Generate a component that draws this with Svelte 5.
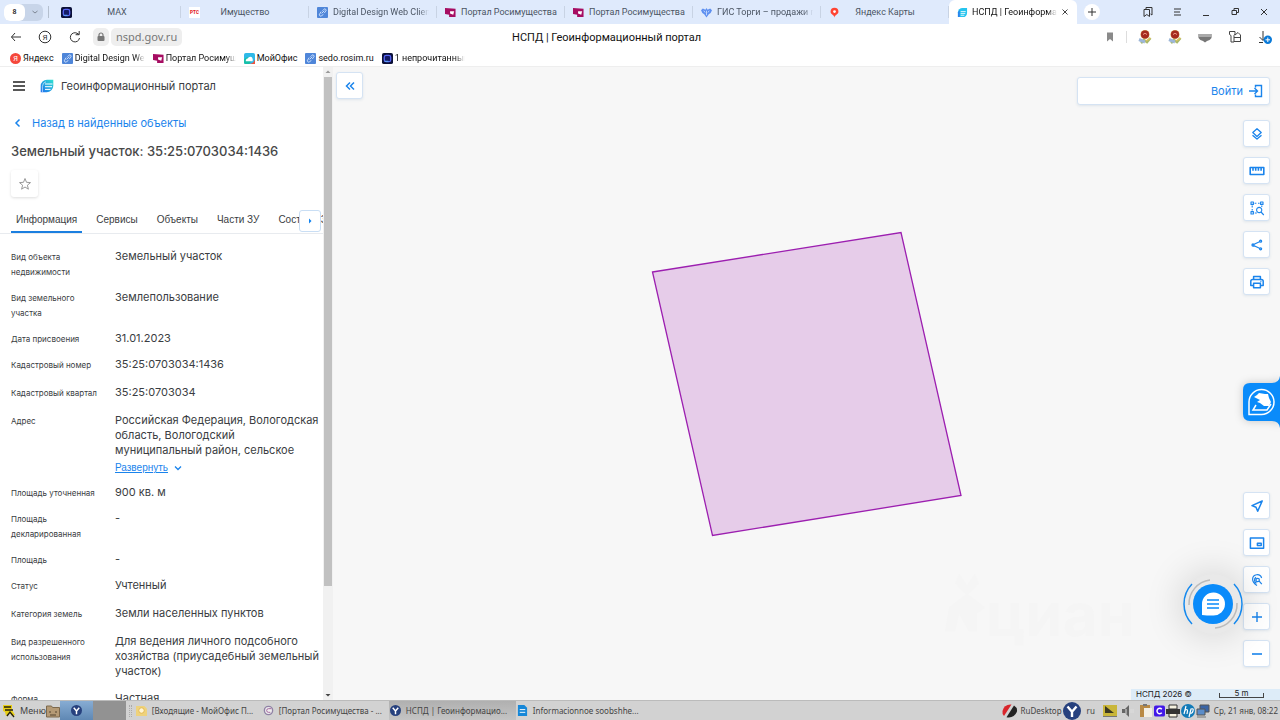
<script>
  const tabs = [
    { icon: "max", title: "MAX", short: true },
    { icon: "rts", title: "Имущество", short: true },
    { icon: "link", title: "Digital Design Web Client", cut: true },
    { icon: "rosim", title: "Портал Росимущества" },
    { icon: "rosim", title: "Портал Росимущества" },
    { icon: "gis", title: "ГИС Торги – продажи го", cut: true },
    { icon: "pin", title: "Яндекс Карты", short: true },
    { icon: "nspd", title: "НСПД | Геоинформац", active: true, cut: true },
  ];

  const bookmarks = [
    { icon: "ya", title: "Яндекс" },
    { icon: "link", title: "Digital Design Web", cut: true },
    { icon: "rosim", title: "Портал Росимущ", cut: true },
    { icon: "office", title: "МойОфис" },
    { icon: "link", title: "sedo.rosim.ru" },
    { icon: "max", title: "1 непрочитанный", cut: true },
  ];

  const sections = ["Информация", "Сервисы", "Объекты", "Части ЗУ", "Состав ЕЗП"];

  const rows = [
    { label: "Вид объекта недвижимости", value: "Земельный участок" },
    { label: "Вид земельного участка", value: "Землепользование" },
    { label: "Дата присвоения", value: "31.01.2023" },
    { label: "Кадастровый номер", value: "35:25:0703034:1436", tall: true },
    { label: "Кадастровый квартал", value: "35:25:0703034", tall: true },
    {
      label: "Адрес",
      value: "Российская Федерация, Вологодская область, Вологодский муниципальный район, сельское",
      more: true,
    },
    { label: "Площадь уточненная", value: "900 кв. м" },
    { label: "Площадь декларированная", value: "-" },
    { label: "Площадь", value: "-" },
    { label: "Статус", value: "Учтенный", tall: true },
    { label: "Категория земель", value: "Земли населенных пунктов", tall: true },
    {
      label: "Вид разрешенного использования",
      value: "Для ведения личного подсобного хозяйства (приусадебный земельный участок)",
      tall: true,
    },
    { label: "Форма собственности", value: "Частная" },
  ];

  const topTools = [
    { name: "Слои", d: "M8 2.8 12.2 6.600 8 10.400 3.800 6.600ZM3.500 9.200 8 13l4.500-3.800" },
    { name: "Измерения", w: 1.6, d: "M1.2 4.5h13.6v7H1.2ZM4 4.5v3.2M6.7 4.5v3.2M9.4 4.5v3.2M12.1 4.5v3.2" },
    {
      name: "Поиск в области",
      w: 1.1,
      d: "M2 2h2.4v2.4H2ZM11.6 2H14v2.4h-2.4ZM2 11.6h2.4V14H2ZM5.6 3.2h1.8M9 3.2h1.6M3.2 5.6v1.8M3.2 9v1.6M5.8 13h2M12.8 5.6v1.4M7.6 10a2.6 2.6 0 1 0 5.2 0a2.6 2.6 0 1 0-5.2 0M12 12l2.8 3",
    },
    {
      name: "Поделиться",
      w: 1.3,
      d: "M4.600 7.500 11 4.500M4.600 8.500l6.400 3M3 8a1 1 0 1 0 2 0a1 1 0 1 0-2 0M10.600 4.200a1 1 0 1 0 2 0a1 1 0 1 0-2 0M10.600 11.800a1 1 0 1 0 2 0a1 1 0 1 0-2 0",
    },
    { name: "Печать", w: 1.5, d: "M4.6 5.4V2.4h6.8v3M4.2 11.4H1.8v-4.200q0-1.800 1.800-1.800h8.800q1.800 0 1.800 1.800v4.200h-2.400M4.600 9.200h6.800v4.600H4.600ZM11.400 7.400h1" },
  ];

  const bottomTools = [
    { name: "Моё местоположение", w: 1.5, d: "M13.200 3 3 7.600l4 1.700L8.700 13.200Z" },
    { name: "Обзорная карта", w: 1.5, d: "M1.400 3h13.200v10.200H1.400ZM8.400 8.200h3.800v2.400H8.400Z" },
    {
      name: "Поиск по координатам",
      w: 1.2,
      d: "M8 13.500C5 11.500 3.600 9.600 3.600 7.200a4.600 4.600 0 0 1 9-1.200M7 8a1.700 1.700 0 1 0 3.400 0a1.700 1.700 0 1 0-3.400 0M7.500 11.200a3.500 3.500 0 0 1-.5-6M10.400 9.400l2.400 2.800",
    },
    { name: "Приблизить", w: 1.4, d: "M8 3v10M3 8h10" },
    { name: "Отдалить", w: 1.6, d: "M3 8h10" },
  ];

  const windows = [
    { icon: "mail", title: "[Входящие - МойОфис П..." },
    { icon: "chrome", title: "[Портал Росимущества - ..." },
    { icon: "browser", title: "НСПД | Геоинформацио...", active: true },
    { icon: "doc", title: "Informacionnoe soobshhe..." },
  ];

  let section = $state("Информация");
</script>

{#snippet favicon(name)}
  <svg class="favicon" viewBox="0 0 12 12" aria-hidden="true">
    {#if name === "max"}
      <rect width="12" height="12" rx="2" fill="#0b1038" />
      <rect x="2.500" y="2.500" width="7" height="7" rx="2" fill="#141a66" stroke="#5865f5" stroke-width="1.400" />
      <path d="M3 9h4" stroke="#5fb7f7" />
    {:else if name === "rts"}
      <rect width="12" height="12" fill="#fff" />
      <text x="6" y="8" text-anchor="middle" font-size="5" font-weight="900" fill="#e31b23">РТС</text>
    {:else if name === "link"}
      <rect width="12" height="12" rx="1" fill="#4f86d9" />
      <path d="m5 7 3-3m-3.500 1L3 7.500a1.300 1.300 0 0 0 2 2L7 8M6 4l1.500-1.500a1.300 1.300 0 0 1 2 2L8 6.500" fill="none" stroke="#d8e8ff" />
    {:else if name === "rosim"}
      <path d="M0 1 11.500 2v9H4.500V8.500L0 7.500Z" fill="#a60d62" />
      <path d="M5.500 4.500h4.500l-1 4L5.500 7Z" fill="#fff" />
    {:else if name === "gis"}
      <path d="m6 1 1.200 2L10 1.500l2 2-1.500 3L8.500 8 6 11.500 3.500 8l-2-1.500L0 3.500l2-2L4.800 3Z" fill="#5d8ff0" />
      <path d="M6 4v5M3 4l1.500 2M9 4 7.500 6" stroke="#e2edfd" stroke-width=".8" />
    {:else if name === "pin"}
      <path d="M6 .800a4.300 4.300 0 0 0-4.300 4.300C1.700 8 6 8.500 6 11.800 6 8.500 10.300 8 10.300 5.100A4.300 4.300 0 0 0 6 .800Z" fill="#f43" />
      <circle cx="6" cy="5" r="1.500" fill="#fff" />
    {:else if name === "ya"}
      <circle cx="6" cy="6" r="6" fill="#f5473b" />
      <text x="6" y="9" text-anchor="middle" font-size="8" fill="#fff">Я</text>
    {:else if name === "office"}
      <rect width="12" height="12" rx="2" fill="#2fb9e8" />
      <path d="M0 7q4-5 7 0 1 3-1 5H2Q0 12 0 10Z" fill="#16c0a9" />
      <path d="M12 7v5H5q5 0 7-5Z" fill="#f0523d" />
      <path d="M2 9V7.500q1-1.500 2-1.500 1-2 3-2t2.500 2.500V9Z" fill="#fff" />
    {:else}
      <path d="M1 11V6a5 5 0 0 1 5-5h5v5.500A4.500 4.500 0 0 1 6.500 11Z" fill="#25c4ee" />
      <path d="M4 5h5.500M4 7h5M4 9h4" stroke="#fff" stroke-width=".9" />
      <path d="M1 11V6l2-3v8Z" fill="#2b83ee" />
    {/if}
  </svg>
{/snippet}

{#snippet tool(item)}
  <button class="tool" aria-label={item.name}>
    <svg viewBox="0 0 16 16" width="16" height="16">
      <path d={item.d} fill="none" stroke="currentColor" stroke-width={item.w ?? 1.3} stroke-linejoin="round" />
    </svg>
  </button>
{/snippet}

{#snippet flower()}
  <svg viewBox="0 0 14 14" width="14" height="14">
    <path d="m3 13 3-3 3 2 3.500-4" fill="none" stroke="#a9b96b" stroke-width="2.500" />
    <path d="m1 9.500 6 2.500" stroke="#9db6d8" stroke-width="3" />
    <path d="m8 11 4.500-3" stroke="#e0c25a" stroke-width="1.500" />
    <circle cx="7" cy="4.500" r="4.500" fill="#d69b51" />
    <circle cx="7" cy="4.500" r="4" fill="#a52a20" />
    <path d="M5 4.500q2-2.500 4 0" fill="none" stroke="#ef9a84" />
  </svg>
{/snippet}

<div class="screen">
  <div class="tabbar">
    <button class="counter"><span>8</span>
      <svg viewBox="0 0 8 8" width="8" height="8"><path d="m1.500 3 2.500 2L6.500 3" fill="none" stroke="#7e8794" /></svg>
    </button>
    <div class="tabs">
      {#each tabs as tab}
        <div class="tab" class:active={tab.active} class:short={tab.short}>
          {@render favicon(tab.icon)}
          <span class="tab-title" class:fade={tab.cut}>{tab.title}</span>
          {#if tab.active}
            <button class="plain" aria-label="Закрыть вкладку">
              <svg viewBox="0 0 8 8" width="8" height="8"><path d="m1.500 1.500 5 5m0-5-5 5" stroke="#444" /></svg>
            </button>
          {/if}
        </div>
      {/each}
    </div>
    <button class="new-tab" aria-label="Новая вкладка">
      <svg viewBox="0 0 8 8" width="8" height="8"><path d="M4 0v8M0 4h8" stroke="#333" /></svg>
    </button>
    <div class="window-controls">
      <button class="plain" aria-label="Коллекции">
        <svg viewBox="0 0 12 12" width="12" height="12"><path d="M4 3V1.500h6v7.500L8.500 8M2 3.500h5.500v7L4.800 8.500 2 10.500Z" fill="none" stroke="#333" stroke-linejoin="round" /></svg>
      </button>
      <button class="plain" aria-label="Меню">
        <svg viewBox="0 0 12 12" width="12" height="12"><path d="M3 3h7M3 6h6M3 9h7" stroke="#333" /></svg>
      </button>
      <button class="plain" aria-label="Свернуть">
        <svg viewBox="0 0 12 12" width="12" height="12"><path d="M3 9.500h6" stroke="#333" /></svg>
      </button>
      <button class="plain" aria-label="Развернуть окно">
        <svg viewBox="0 0 12 12" width="12" height="12"><path d="M5 4V2.500h4.500v4H8M3 4.500h4.500v4H3Z" fill="none" stroke="#333" /></svg>
      </button>
      <button class="plain" aria-label="Закрыть">
        <svg viewBox="0 0 12 12" width="12" height="12"><path d="m3 3 6 6m0-6-6 6" stroke="#333" /></svg>
      </button>
    </div>
  </div>

  <div class="navbar">
    <div class="nav-buttons">
      <button class="plain" aria-label="Назад">
        <svg viewBox="0 0 12 12" width="12" height="12"><path d="M11 6H1.500M5 2 1.500 6 5 10" fill="none" stroke="#333" /></svg>
      </button>
      <button class="plain" aria-label="Яндекс">
        <svg viewBox="0 0 14 14" width="14" height="14">
          <circle cx="7" cy="7" r="5.800" fill="none" stroke="#333" />
          <text x="7" y="10" text-anchor="middle" font-size="8" fill="#333">Я</text>
        </svg>
      </button>
      <button class="plain" aria-label="Обновить">
        <svg viewBox="0 0 14 14" width="14" height="14"><path d="M11.500 8A4.600 4.600 0 1 1 9 3.200L11 4.500M11.200 1v3.700H7.600" fill="none" stroke="#333" /></svg>
      </button>
    </div>
    <div class="address">
      <span class="lock">
        <svg viewBox="0 0 8 10" width="8" height="10"><path d="M2 5V3a2 2 0 0 1 4 0v2" fill="none" stroke="#777" stroke-width="1.200" /><rect x=".5" y="4" width="7" height="5" rx="1" fill="#777" /></svg>
      </span>
      <a class="host" href="#host">nspd.gov.ru</a>
    </div>
    <div class="page-title">НСПД | Геоинформационный портал</div>
    <div class="extensions">
      <button class="plain bookmark" aria-label="Закладка">
        <svg viewBox="0 0 10 12" width="10" height="12"><path d="M2 1.500h6v9L5 8 2 10.500Z" fill="#8a8a8a" /></svg>
      </button>
      <button class="plain" aria-label="Расширение 1">{@render flower()}</button>
      <button class="plain" aria-label="Расширение 2">{@render flower()}</button>
      <button class="plain" aria-label="Расширение 3">
        <svg viewBox="0 0 14 14" width="14" height="14"><path d="M.5 4h13v4Q12 10.500 9 11L7 12.500 5 11Q2 10.500.5 8Z" fill="#777" /><path d="M.5 4h13v3H.5Z" fill="#aaa" /></svg>
      </button>
      <button class="plain" aria-label="Расширения">
        <svg viewBox="0 0 14 14" width="14" height="14"><path d="M1.500 1.500h5.500v2.500L6 5.500v6.500H3V5.500L1.500 4.500ZM7 5l3-2.500L12.500 5v6.500H6M6 7.500h6.500" fill="none" stroke="#444" stroke-linejoin="round" /></svg>
      </button>
      <button class="plain" aria-label="Загрузки">
        <svg viewBox="0 0 14 14" width="14" height="14">
          <path d="M5 1v9M1.500 7 5 10.500 8 7.500M1 12.500h4" fill="none" stroke="#333" />
          <circle cx="9.800" cy="9.800" r="4.200" fill="#0a7ad8" />
          <path d="M9.800 7.500v4.500M7.500 9.800H12" stroke="#fff" />
        </svg>
      </button>
    </div>
  </div>

  <nav class="bookmarks">
    {#each bookmarks as mark}
      <a href="#bookmark">{@render favicon(mark.icon)}<span class:cut={mark.cut} class:fade={mark.cut}>{mark.title}</span></a>
    {/each}
  </nav>

  <main>
    <aside>
      <div class="panel">
        <header>
          <button class="plain" aria-label="Меню портала">
            <svg viewBox="0 0 14 14" width="14" height="14"><path d="M1 3h12M1 7h12M1 11h12" stroke="#222" stroke-width="1.500" /></svg>
          </button>
          <svg class="logo" viewBox="0 0 14 14" width="14" height="14">
            <defs>
              <linearGradient id="logo-fill" x1="1" y1="0" x2="0" y2="1">
                <stop offset="0" stop-color="#2fe3d0" /><stop offset="1" stop-color="#1c6cf0" />
              </linearGradient>
            </defs>
            <path d="M.7 13.300V7A6.300 6.300 0 0 1 7 .700h6.300v6A6.600 6.600 0 0 1 6.700 13.300Z" fill="url(#logo-fill)" />
            <path d="M5 5h7.500M5 7.700h7M5 10.400h5.500" fill="none" stroke="#fff" />
            <path d="M2.400 13V7.500Q2.600 3.500 6 2.800" fill="none" stroke="#fff" stroke-width=".6" />
          </svg>
          <span>Геоинформационный портал</span>
        </header>
        <a class="back" href="#results">
          <svg viewBox="0 0 10 10" width="10" height="10"><path d="M6.500 1.500 3 5l3.500 3.500" fill="none" stroke="currentColor" stroke-width="1.500" /></svg>
          Назад в найденные объекты
        </a>
        <h1>Земельный участок: 35:25:0703034:1436</h1>
        <button class="star" aria-label="В избранное">
          <svg viewBox="0 0 14 14" width="14" height="14"><path d="m7 1.500 1.500 3.800 4 .3-3.100 2.600 1 4L7 10l-3.400 2.200 1-4-3.100-2.600 4-.3Z" fill="none" stroke="#999" /></svg>
        </button>
        <div class="sections" role="tablist">
          {#each sections as name}
            <button role="tab" aria-selected={section === name} class:selected={section === name} onclick={() => (section = name)}>{name}</button>
          {/each}
          <button class="scroll-right" aria-label="Прокрутить вкладки">
            <svg viewBox="0 0 6 6" width="6" height="6"><path d="M2 .5 4.500 3 2 5.500Z" fill="currentColor" /></svg>
          </button>
        </div>
        <dl>
          {#each rows as row}
            <div class="row" class:tall={row.tall}>
              <dt>{row.label}</dt>
              <dd>
                {row.value}
                {#if row.more}
                  <button class="more">
                    <span>Развернуть</span>
                    <svg viewBox="0 0 8 8" width="8" height="8"><path d="m1 2.500 3 3 3-3" fill="none" stroke="currentColor" stroke-width="1.300" /></svg>
                  </button>
                {/if}
              </dd>
            </div>
          {/each}
        </dl>
      </div>
      <div class="scrollbar" aria-hidden="true">
        <svg viewBox="0 0 10 10" width="10" height="10"><path d="M5 3.500 7.500 6h-5Z" fill="#999" /></svg>
        <div class="track"><div class="thumb"></div></div>
        <svg viewBox="0 0 10 10" width="10" height="10"><path d="M2.500 4h5L5 6.500Z" fill="#444" /></svg>
      </div>
    </aside>

    <section class="map">
      <svg class="canvas" viewBox="0 0 947 632" aria-label="Граница участка">
        <g fill="#f5f5f5">
          <path d="m626 506 8 12 8-12 4 10-12 12-12-12ZM616 540l18-14 18 14-8 6v18h-8l-10-18-4 18h-10Z" />
          <text x="653" y="568" font-size="60" font-weight="700">циан</text>
        </g>
        <path d="M319.500 204.500 568 165l60 263-248.500 40Z" fill="#a725b6" fill-opacity=".2" stroke="#9c1fb0" stroke-width="1.300" />
      </svg>
      <button class="tool collapse" aria-label="Свернуть панель">
        <svg viewBox="0 0 12 12" width="12" height="12"><path d="M6 2.500 2.500 6 6 9.500M10 2.500 6.500 6 10 9.500" fill="none" stroke="currentColor" stroke-width="1.500" /></svg>
      </button>

      <div class="controls">
        <button class="login">
          Войти
          <svg viewBox="0 0 14 14" width="14" height="14"><path d="M0 7h8.500M5.500 4l3 3-3 3M6.500 3.500V1.500h6v11h-6v-2" fill="none" stroke="currentColor" stroke-width="1.400" /></svg>
        </button>
        <div class="tools">
          {#each topTools as item}{@render tool(item)}{/each}
        </div>
        <div class="tools bottom">
          {#each bottomTools as item}{@render tool(item)}{/each}
        </div>
      </div>

      <button class="assistant" aria-label="Цифровой помощник">
        <svg viewBox="0 0 37 52" width="37" height="52">
          <path d="M37 0v52q-1-7-8-7H7q-7 0-7-7V14q0-7 7-7h22q7 0 8-7Z" fill="#0a8bfa" />
          <path d="M6 38.500V26a12.500 12.500 0 1 1 12.500 12.500Z" fill="none" stroke="#fff" stroke-width="1.500" />
          <path d="m11 21 3-2 2-2 6 1 3 0 1 4 2 4-2 4h-5l-4-3-3-1 3-2Z" fill="#fff" />
          <path d="m13 29-3 5h14l4-6" fill="none" stroke="#fff" stroke-width="1.500" />
        </svg>
      </button>

      <button class="chat" aria-label="Чат поддержки">
        <svg viewBox="0 0 60 60" width="60" height="60">
          <circle cx="30" cy="30" r="20" fill="#0a8bfa" />
          <g fill="none" stroke="#1589ee" stroke-width="1.500">
            <path d="M9 10a29 29 0 0 0 0 40M51 10a29 29 0 0 1 0 40" />
          </g>
          <path d="M6 31A24 24 0 0 1 27 6M54 29a24 24 0 0 1-22 25" fill="none" stroke="#bbb" stroke-width="1.500" />
          <path d="M19 41V30a11.500 11.500 0 1 1 11 11.500h-6Z" fill="#fff" />
          <path d="M24 26h12M24 30h12M24 34h12" stroke="#0a8bfa" stroke-width="1.500" />
        </svg>
      </button>

      <div class="attribution">
        <span>НСПД 2026 ©</span>
        <span class="scale">5 m</span>
      </div>
    </section>
  </main>

  <footer>
    <button class="start">
      <svg viewBox="0 0 14 14" width="14" height="14"><path d="M1 1h9v5l3 5-3 1-2-3-4 3-1-4-2-1Z" fill="#e8cf17" /><path d="M2 3h7M3 6h8M5 12 8 8l4 5" stroke="#26200c" stroke-width="1.300" fill="none" /></svg>
      Меню
    </button>
    <button class="plain" aria-label="Файлы">
      <svg viewBox="0 0 14 14" width="14" height="14"><path d="M.5 2h5l1 1.500h7V13H.5Z" fill="#b59a75" stroke="#7d684c" /><path d="M4 7v2M10 7v2M4 11h6" stroke="#554430" /></svg>
    </button>
    <span class="desk current"><svg viewBox="0 0 12 12" width="11" height="11"><circle cx="6" cy="6" r="6" fill="#27417e" /><path d="m3 3 3 3.500V10M9 3 6 6.500" fill="none" stroke="#fff" stroke-width="1.600" /></svg></span>
    <span class="desk"></span>
    <span class="grip"></span>
    <div class="windows">
      {#each windows as win}
        <button class="window" class:active={win.active}>
          <svg viewBox="0 0 12 12" width="11" height="11">
            {#if win.icon === "mail"}
              <path d="M0 1h9l3 3v8H0Z" fill="#eed27c" /><circle cx="6" cy="6" r="3" fill="#fff5d4" stroke="#e0b54c" />
            {:else if win.icon === "chrome"}
              <circle cx="6" cy="6" r="4.500" fill="#eee" stroke="#9082a5" stroke-width="1.500" /><path d="M9 4H6a2 2 0 0 0 0 4h2" fill="none" stroke="#a05a99" />
            {:else if win.icon === "browser"}
              <circle cx="6" cy="6" r="6" fill="#27417e" /><path d="m3 3 3 3.500V10M9 3 6 6.500" fill="none" stroke="#fff" stroke-width="1.600" />
            {:else}
              <path d="M1 0h7l3 3v9H1Z" fill="#1687d8" /><path d="M3 5h6M3 8h6" stroke="#fff" />
            {/if}
          </svg>
          <span>{win.title}</span>
        </button>
      {/each}
    </div>
    <div class="tray">
      <svg viewBox="0 0 16 14" width="16" height="14"><path d="M9.500.500Q2 0 .500 7 0 10 2 12Z" fill="#d9252b" /><path d="M12 1.500 4.500 13.200Q12 14.500 14.800 8 16 4 12 1.500Z" fill="#222" /></svg>
      <span class="desktop-name">RuDesktop</span>
      <svg viewBox="0 0 12 12" width="18" height="18"><circle cx="6" cy="6" r="6" fill="#27417e" /><path d="m3 3 3 3.500V10M9 3 6 6.500" fill="none" stroke="#fff" stroke-width="1.600" /></svg>
      <span class="lang">ru</span>
      <svg viewBox="0 0 14 14" width="14" height="14"><rect y="1" width="14" height="11" fill="#c9b63a" /><path d="m2 2 9 7H2Z" fill="#3c3923" /><path d="M0 12.500h14" stroke="#777" /></svg>
      <svg class="sound" viewBox="0 0 14 14" width="14" height="14"><path d="M1 5h3l4-4v12L4 9H1Z" fill="#666" /><path d="M5 5v5M10 5v4M12 5v4" stroke="#ddd" /></svg>
      <svg viewBox="0 0 14 14" width="14" height="14"><rect x="1" y="1" width="10" height="12" fill="#b98a45" /><path d="M5 4h8v9H5Z" fill="#f3efe5" /><path d="M4 0h4v2H4Z" fill="#777" /></svg>
      <svg viewBox="0 0 12 12" width="11" height="12"><rect width="12" height="12" rx="2" fill="#4218e8" /><path d="M8.500 4A3 3 0 1 0 8.500 8" fill="none" stroke="#fff" stroke-width="1.600" /></svg>
      <svg viewBox="0 0 14 14" width="14" height="14"><path d="M3 1h8v4H3ZM3 9h8v4H3Z" fill="#f5f1df" stroke="#333" /><path d="M0 5h14v5H0Z" fill="#333" /></svg>
      <svg viewBox="0 0 14 14" width="14" height="14"><circle cx="7" cy="7" r="7" fill="#137bb8" /><path d="M5 2 3 10M3.500 7q3-3 3 0L6 10M8 13l2-8q3-1 2 2-1 3-3 2" fill="none" stroke="#fff" stroke-width="1.200" /></svg>
      <svg viewBox="0 0 14 14" width="14" height="14"><path d="M4 1h9v7H4Z" fill="#3a64a5" stroke="#555" /><path d="M1 5h8v6H1Z" fill="#5b8dca" stroke="#555" /><path d="M1 13h9" stroke="#777" /></svg>
      <time>Ср, 21 янв, 08:22</time>
    </div>
  </footer>
</div>

<style>
  :global(body) {
    margin: 0;
  }

  .screen {
    display: flex;
    flex-direction: column;
    height: 100vh;
    overflow: hidden;
    font-family: Roboto, sans-serif;
    font-size: 9px;
    color: #222;
    background: #fff;
  }

  .screen * {
    box-sizing: border-box;
  }

  svg {
    display: block;
    flex: none;
  }

  button {
    font: inherit;
    color: inherit;
    cursor: pointer;
  }

  a {
    color: inherit;
    text-decoration: none;
  }

  .plain {
    display: flex;
    padding: 0;
    border: none;
    background: none;
  }

  .favicon {
    width: 11px;
    height: 11px;
  }

  .fade {
    mask-image: linear-gradient(to left, transparent, #000 10px);
  }

  /* browser chrome */
  .tabbar {
    display: flex;
    align-items: center;
    flex: none;
    height: 24px;
    padding: 0 10px 0 4px;
    background: #dfeafc;
  }

  .counter {
    display: flex;
    flex: none;
    align-items: center;
    gap: 6px;
    width: 39px;
    height: 17px;
    padding: 0;
    border: none;
    border-radius: 6px;
    background: #c8d5e9;
    font-size: 7px;
    font-weight: 600;
  }

  .counter span {
    width: 21px;
    line-height: 17px;
    border-radius: 6px;
    background: #fff;
  }

  .tabs {
    display: flex;
    flex: 1;
    min-width: 0;
    height: 24px;
    margin-left: 5px;
    padding-left: 5px;
    background: linear-gradient(#b4bfce, #b4bfce) left / 1px 12px no-repeat;
  }

  .tab {
    display: flex;
    flex: 1 1 0;
    min-width: 0;
    align-items: center;
    gap: 5px;
    padding: 0 8px;
    color: #4b5563;
    background: linear-gradient(#c8d3e4, #c8d3e4) right / 1px 12px no-repeat;
  }

  .tab-title {
    flex: 1;
    overflow: hidden;
    white-space: nowrap;
  }

  .short .tab-title {
    padding-right: 16px;
    text-align: center;
  }

  .tab.active {
    gap: 4px;
    background: #fff;
    border-radius: 6px 6px 0 0;
    color: #111;
  }

  .new-tab {
    display: grid;
    flex: none;
    place-items: center;
    width: 16px;
    height: 16px;
    margin-left: 7px;
    padding: 0;
    border: none;
    border-radius: 50%;
    background: #fff;
  }

  .window-controls {
    display: flex;
    gap: 17px;
    margin-left: 42px;
  }

  .navbar {
    display: flex;
    align-items: center;
    flex: none;
    height: 26px;
    padding: 0 8px 0 10px;
  }

  .nav-buttons {
    display: flex;
    align-items: center;
    gap: 16px;
    width: 83px;
  }

  .address {
    display: flex;
    gap: 2px;
    font-family: "Noto Sans", sans-serif;
    font-size: 11px;
    line-height: 18px;
    color: #777;
  }

  .lock,
  .host {
    padding: 0 5px;
    border-radius: 5px;
    background: #eee;
  }

  .lock {
    display: grid;
    place-items: center;
    padding: 0 4px;
  }

  .page-title {
    flex: 1;
    padding-right: 74px;
    text-align: center;
    font-size: 11px;
    color: #111;
  }

  .extensions {
    display: flex;
    align-items: center;
    gap: 16px;
  }

  .bookmark {
    padding-right: 11px;
    border-right: 1px solid #ddd;
    margin-right: -5px;
  }

  .bookmarks {
    display: flex;
    align-items: center;
    flex: none;
    gap: 8px;
    height: 17px;
    padding: 0 10px;
    border-bottom: 1px solid #eee;
    color: #111;
  }

  .bookmarks a {
    display: flex;
    align-items: center;
    gap: 2px;
    white-space: nowrap;
  }

  .cut {
    max-width: 70px;
    overflow: hidden;
  }

  /* portal */
  main {
    display: flex;
    flex: 1;
    min-height: 0;
    font-family: Inter, sans-serif;
    font-size: 11px;
    color: #3a3d42;
  }

  aside {
    display: flex;
    flex: none;
    width: 333px;
  }

  .panel {
    flex: 1;
    min-width: 0;
    overflow: hidden;
  }

  header {
    display: flex;
    align-items: center;
    height: 37px;
    padding-left: 12px;
  }

  .logo {
    margin: 0 7px 0 14px;
  }

  .back {
    display: flex;
    align-items: center;
    gap: 9px;
    height: 38px;
    padding-left: 13px;
    color: #1a84ec;
  }

  h1 {
    margin: 0 11px;
    font-size: 13px;
    font-weight: 500;
    line-height: 18px;
    color: #484848;
  }

  .star {
    display: grid;
    place-items: center;
    width: 27px;
    height: 27px;
    margin: 10px 11px 11px;
    padding: 0;
    border: none;
    border-radius: 3px;
    background: #fff;
    box-shadow: 0 1px 3px #0002;
  }

  .sections {
    position: relative;
    display: flex;
    height: 26px;
    padding-left: 11px;
    border-bottom: 1px solid #e8ebef;
    overflow: hidden;
    font-family: "Liberation Sans", sans-serif;
    font-size: 10px;
  }

  .sections button {
    flex: none;
    margin-right: 9px;
    padding: 0 5px;
    border: none;
    border-bottom: 2px solid transparent;
    background: none;
  }

  .sections .selected {
    border-bottom-color: #1b7fe0;
  }

  .sections .scroll-right {
    position: absolute;
    top: 2px;
    right: 2px;
    display: grid;
    place-items: center;
    width: 22px;
    height: 22px;
    margin: 0;
    padding: 0;
    border: 1px solid #c9def4;
    border-radius: 3px;
    background: #fff;
    color: #0f82f0;
  }

  dl {
    display: flex;
    flex-direction: column;
    gap: 10px;
    margin: 15px 0 0 11px;
  }

  .row {
    display: grid;
    grid-template-columns: 87px 1fr;
    column-gap: 17px;
    line-height: 15px;
  }

  .row.tall {
    padding-bottom: 2px;
  }

  dt {
    padding-top: 1px;
    font-size: 8px;
  }

  dd {
    margin: 0;
  }

  .more {
    display: flex;
    align-items: center;
    gap: 6px;
    padding: 2px 0 0;
    border: none;
    background: none;
    font-family: "Liberation Sans", sans-serif;
    font-size: 10px;
    line-height: 15px;
    color: #1a84ec;
  }

  .more span {
    text-decoration: underline;
  }

  .scrollbar {
    display: flex;
    flex-direction: column;
    width: 10px;
    background: #f1f1f1;
  }

  .track {
    flex: 1;
  }

  .thumb {
    height: 83%;
    margin: 0 1px;
    background: #c1c1c1;
  }

  .map {
    position: relative;
    flex: 1;
    min-width: 0;
    background: #f7f7f7;
  }

  .canvas {
    width: 100%;
    height: 100%;
  }

  .tool,
  .login {
    display: grid;
    place-items: center;
    width: 27px;
    height: 27px;
    padding: 0;
    border: 1px solid #d5e3f3;
    border-radius: 3px;
    background: #fff;
    box-shadow: 0 1px 3px #1b4f8a1c;
    color: #1a84ec;
  }

  .collapse {
    position: absolute;
    top: 5px;
    left: 3px;
  }

  .controls {
    position: absolute;
    inset: 10px 10px 33px auto;
    display: flex;
    flex-direction: column;
    align-items: flex-end;
  }

  .login {
    display: flex;
    align-items: center;
    justify-content: flex-end;
    gap: 6px;
    width: 193px;
    height: 28px;
    padding-right: 6px;
    margin-bottom: 15px;
  }

  .tools {
    display: flex;
    flex-direction: column;
    gap: 10px;
  }

  .bottom {
    margin-top: auto;
  }

  .assistant,
  .chat {
    position: absolute;
    padding: 0;
    border: none;
    background: none;
  }

  .assistant {
    top: 309px;
    right: 0;
    filter: drop-shadow(0 0 4px #0003);
  }

  .chat {
    right: 37px;
    bottom: 66px;
    border-radius: 50%;
    background: #e9e9e9;
    box-shadow: 0 0 36px 4px #0002;
  }

  .attribution {
    position: absolute;
    right: 0;
    bottom: 0;
    display: flex;
    justify-content: space-between;
    width: 149px;
    padding: 0 16px 0 5px;
    background: #ddecf8;
    font-size: 8px;
    line-height: 11px;
    color: #222;
  }

  .scale {
    width: 45px;
    height: 9px;
    background: linear-gradient(#444, #444) left bottom / 1px 4px no-repeat,
      linear-gradient(#444, #444) right bottom / 1px 4px no-repeat;
    border-bottom: 1px solid #444;
    line-height: 9px;
    text-align: center;
  }

  /* desktop taskbar */
  footer {
    display: flex;
    align-items: center;
    flex: none;
    height: 20px;
    padding: 0 2px;
    border-top: 1px solid #bbb;
    background: #d2d2d2;
    font-family: "Noto Sans", sans-serif;
    font-size: 8px;
    color: #444;
  }

  .start {
    display: flex;
    align-items: center;
    gap: 4px;
    padding: 0;
    border: none;
    background: none;
    font-size: 9px;
  }

  .desk {
    display: grid;
    place-items: center;
    width: 33px;
    height: 19px;
    background: #929292;
  }

  .desk.current {
    background: linear-gradient(#87acd3, #5f88b4);
  }

  .grip {
    width: 3px;
    height: 12px;
    margin: 0 3px;
    border: dotted #aaa;
    border-width: 0 1px;
  }

  .windows {
    display: flex;
    flex: 1;
  }

  .window {
    display: flex;
    align-items: center;
    gap: 5px;
    width: 127px;
    height: 19px;
    padding: 0 1px;
    border: none;
    background: none;
    white-space: nowrap;
  }

  .window.active {
    background: linear-gradient(#b0b0b0, #c4c4c4);
  }

  .tray {
    display: flex;
    align-items: center;
    gap: 1px;
    white-space: nowrap;
  }

  .lang {
    padding: 0 7px 0 5px;
  }

  .desktop-name {
    padding-left: 2px;
  }

  .sound {
    margin: 0 3px;
  }

  time {
    padding-left: 3px;
  }
</style>
